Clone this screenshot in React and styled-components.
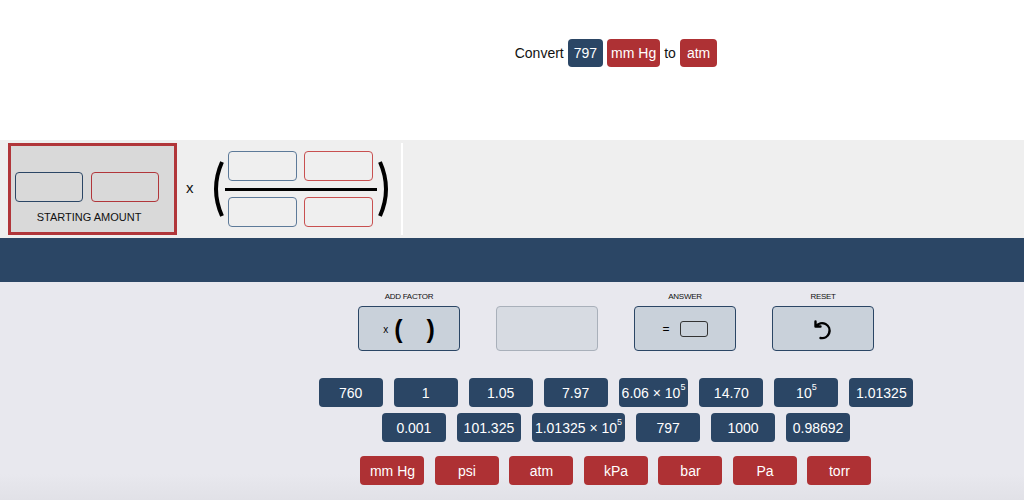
import { styled, createGlobalStyle } from "styled-components";

const GlobalStyle = createGlobalStyle`
  body {
    margin: 0;
    font-family: "Liberation Sans", Arial, sans-serif;
    background: #ffffff;
  }
`;

const Page = styled.div`
  width: 1024px;
  height: 500px;
  display: flex;
  flex-direction: column;
  overflow: hidden;
`;

const Header = styled.div`
  height: 140px;
  box-sizing: border-box;
  padding: 39px 0 0 208px;
  display: flex;
  justify-content: center;
  align-items: flex-start;
  gap: 4px;
  font-size: 14px;
  color: #111;
`;

const Word = styled.span`
  line-height: 28px;
`;

const Chip = styled.span`
  display: inline-flex;
  align-items: center;
  justify-content: center;
  height: 28px;
  padding: 0 ${(p) => p.$pad ?? 6}px;
  border-radius: 4px;
  color: #fff;
  background: ${(p) => (p.$red ? "#ae3134" : "#2b4665")};
`;

const Workspace = styled.div`
  height: 98px;
  box-sizing: border-box;
  padding: 3px 0 3px 8px;
  background: #efefef;
  display: flex;
  align-items: center;
`;

const StartBox = styled.div`
  align-self: stretch;
  width: 169px;
  box-sizing: border-box;
  border: 3px solid #b1363a;
  background: #d9d9d9;
  display: flex;
  flex-direction: column;
  padding: 26px 0 0 4px;
`;

const SlotRow = styled.div`
  display: flex;
  gap: ${(p) => p.$gap || 8}px;
`;

const Slot = styled.div`
  width: ${(p) => p.$w || 68}px;
  height: 30px;
  box-sizing: border-box;
  border-radius: 4px;
  border: 1px solid ${(p) => (p.$red ? p.$soft ? "#c85050" : "#b1363a" : p.$soft ? "#5d7a99" : "#2b4665")};
`;

const StartLabel = styled.div`
  margin-top: 9px;
  width: 148px;
  text-align: center;
  font-size: 11px;
  color: #111;
`;

const Times = styled.span`
  margin: 0 16px 4px 9px;
  font-size: 15px;
  color: #111;
`;

const Fraction = styled.div`
  display: flex;
  align-items: center;
`;

const FracBody = styled.div`
  width: 152px;
  display: flex;
  flex-direction: column;
  align-items: center;
`;

const FracLine = styled.div`
  width: 152px;
  height: 3px;
  background: #000;
  margin: 7px 0 6px;
`;

const Divider = styled.div`
  align-self: stretch;
  width: 2px;
  margin-left: 9px;
  background: #ffffff;
`;

const Band = styled.div`
  height: 44px;
  background: #2b4665;
`;

const Controls = styled.div`
  flex: 1;
  background: linear-gradient(#e8e8ee 88%, #e1e1e7 100%);
  padding: 10px 0 0 208px;
  display: flex;
  flex-direction: column;
  align-items: center;
`;

const ActionRow = styled.div`
  display: flex;
  gap: 36px;
`;

const ActionGroup = styled.div`
  display: flex;
  flex-direction: column;
  align-items: center;
  gap: 4px;
`;

const ActionLabel = styled.div`
  height: 10px;
  line-height: 10px;
  font-size: 8px;
  letter-spacing: -0.3px;
  color: #111;
`;

const ActionButton = styled.div`
  width: 102px;
  height: 45px;
  box-sizing: border-box;
  border-radius: 4px;
  border: 1px solid ${(p) => (p.$disabled ? "#a9b0ba" : "#2b4665")};
  background: ${(p) => (p.$disabled ? "#d7dbe2" : "#c9d1da")};
  display: flex;
  align-items: center;
  justify-content: center;
  gap: ${(p) => p.$gap || 0}px;
  color: #000;
`;

const SmallX = styled.span`
  font-size: 10px;
  margin: 2px 6px 0 0;
`;

const BigParen = styled.span`
  font-size: 25px;
  font-weight: bold;
  line-height: 26px;
  margin-right: ${(p) => p.$space || 0}px;
`;

const Equals = styled.span`
  font-size: 12px;
`;

const MiniBox = styled.div`
  width: 28px;
  height: 16px;
  box-sizing: border-box;
  border: 1.5px solid #333;
  border-radius: 3px;
`;

const Tiles = styled.div`
  margin-top: 27px;
  display: flex;
  flex-direction: column;
  align-items: center;
`;

const TileRow = styled.div`
  display: flex;
  gap: ${(p) => p.$gap || 11}px;
  margin-top: ${(p) => p.$top || 0}px;
`;

const Tile = styled.div`
  min-width: 64px;
  height: 29px;
  box-sizing: border-box;
  padding: 0 3px;
  border-radius: 4px;
  background: ${(p) => (p.$red ? "#ae3134" : "#2b4665")};
  color: #fff;
  font-size: 14px;
  display: flex;
  align-items: center;
  justify-content: center;
  white-space: pre;
`;

const Sup = styled.sup`
  font-size: 9px;
  vertical-align: baseline;
  position: relative;
  top: -6px;
`;

function Paren({ right }) {
  return (
    <svg width="15" height="58" viewBox="0 0 15 58">
      <path
        d={right ? "M3 2 Q15 29 3 56" : "M12 2 Q0 29 12 56"}
        fill="none"
        stroke="#000"
        strokeWidth="4"
      />
    </svg>
  );
}

function ResetIcon() {
  return (
    <svg width="24" height="24" viewBox="0 0 24 24">
      <path
        d="M4.5 4.5v5h5M5 9.2A7.5 7.5 0 1 1 9.5 21"
        fill="none"
        stroke="#000"
        strokeWidth="2.4"
        strokeLinecap="round"
        strokeLinejoin="round"
      />
    </svg>
  );
}

function Num({ v, exp }) {
  if (exp) {
    return (
      <>
        {v ? v + " × " : ""}10<Sup>5</Sup>
      </>
    );
  }
  return v;
}

const row1 = [
  { v: "760" },
  { v: "1" },
  { v: "1.05" },
  { v: "7.97" },
  { v: "6.06", exp: true },
  { v: "14.70" },
  { v: "", exp: true },
  { v: "1.01325" },
];

const row2 = [
  { v: "0.001" },
  { v: "101.325" },
  { v: "1.01325", exp: true },
  { v: "797" },
  { v: "1000" },
  { v: "0.98692" },
];

const units = ["mm Hg", "psi", "atm", "kPa", "bar", "Pa", "torr"];

export default function App() {
  return (
    <Page>
      <GlobalStyle />
      <Header>
        <Word>Convert</Word>
        <Chip>797</Chip>
        <Chip $red $pad={4}>mm Hg</Chip>
        <Word>to</Word>
        <Chip $red $pad={7}>atm</Chip>
      </Header>

      <Workspace>
        <StartBox>
          <SlotRow>
            <Slot />
            <Slot $red />
          </SlotRow>
          <StartLabel>STARTING AMOUNT</StartLabel>
        </StartBox>
        <Times>x</Times>
        <Fraction>
          <Paren />
          <FracBody>
            <SlotRow $gap={7}>
              <Slot $w={69} $soft />
              <Slot $w={69} $red $soft />
            </SlotRow>
            <FracLine />
            <SlotRow $gap={7}>
              <Slot $w={69} $soft />
              <Slot $w={69} $red $soft />
            </SlotRow>
          </FracBody>
          <Paren right />
        </Fraction>
        <Divider />
      </Workspace>

      <Band />

      <Controls>
        <ActionRow>
          <ActionGroup>
            <ActionLabel>ADD FACTOR</ActionLabel>
            <ActionButton>
              <SmallX>x</SmallX>
              <BigParen $space={24}>(</BigParen>
              <BigParen>)</BigParen>
            </ActionButton>
          </ActionGroup>
          <ActionGroup>
            <ActionLabel />
            <ActionButton $disabled />
          </ActionGroup>
          <ActionGroup>
            <ActionLabel>ANSWER</ActionLabel>
            <ActionButton $gap={10}>
              <Equals>=</Equals>
              <MiniBox />
            </ActionButton>
          </ActionGroup>
          <ActionGroup>
            <ActionLabel>RESET</ActionLabel>
            <ActionButton>
              <ResetIcon />
            </ActionButton>
          </ActionGroup>
        </ActionRow>

        <Tiles>
          <TileRow>
            {row1.map((t, i) => (
              <Tile key={i}>
                <Num {...t} />
              </Tile>
            ))}
          </TileRow>
          <TileRow $top={6}>
            {row2.map((t, i) => (
              <Tile key={i}>
                <Num {...t} />
              </Tile>
            ))}
          </TileRow>
          <TileRow $top={14} $gap={10.5}>
            {units.map((u) => (
              <Tile key={u} $red>
                {u}
              </Tile>
            ))}
          </TileRow>
        </Tiles>
      </Controls>
    </Page>
  );
}
